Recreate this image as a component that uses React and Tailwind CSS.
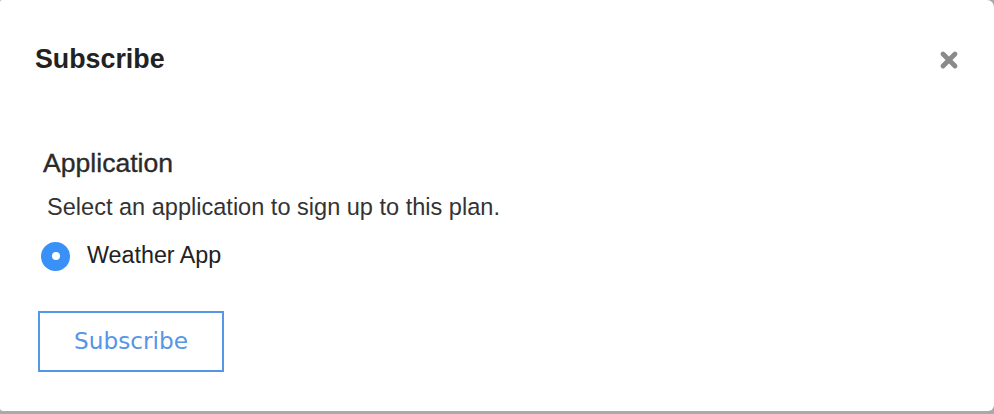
export default function App() {
  return (
    <div className="w-[994px] h-[414px] bg-[#a9a9a9]">
      <div className="h-[411px] bg-white rounded-tl-[2px] rounded-bl-[3px] rounded-tr-[7px] rounded-br-[6px]">
        <div className="flex items-center justify-between pl-[35px] pr-[35px] pt-[43px]">
          <h1 className="text-[26.8px] leading-[32px] font-bold text-[#222] font-['Liberation_Sans',Arial,sans-serif]">
            Subscribe
          </h1>
          <svg width="20" height="20" viewBox="0 0 20 20" className="mt-[1px]">
            <path d="M4 4 L16 16 M16 4 L4 16" stroke="#8a8a8a" strokeWidth="4.8" strokeLinecap="round" />
          </svg>
        </div>
        <div className="pl-[43px] mt-[73px] font-['Liberation_Sans',Arial,sans-serif] text-[#2a2a2a]">
          <div className="text-[26.6px] leading-[30px] [-webkit-text-stroke:0.35px_#2a2a2a]">Application</div>
          <div className="mt-[15px] ml-[4px] text-[23.55px] leading-[28px] text-[#333]">
            Select an application to sign up to this plan.
          </div>
          <div className="mt-[20px] ml-[-2px] h-[28px] flex items-center">
            <div className="w-[29px] h-[29px] rounded-full bg-[#3990f6] flex items-center justify-center mt-[2px]">
              <div className="w-[8px] h-[8px] rounded-full bg-white"></div>
            </div>
            <span className="ml-[17px] text-[23.3px] leading-[28px] text-[#222]">Weather App</span>
          </div>
          <button className="mt-[42px] ml-[-5px] w-[186px] h-[61px] border-2 border-[#5596e6] flex items-center justify-center text-[23.2px] text-[#5596e6] font-['DejaVu_Sans',Verdana,sans-serif]">
            Subscribe
          </button>
        </div>
      </div>
    </div>
  );
}
